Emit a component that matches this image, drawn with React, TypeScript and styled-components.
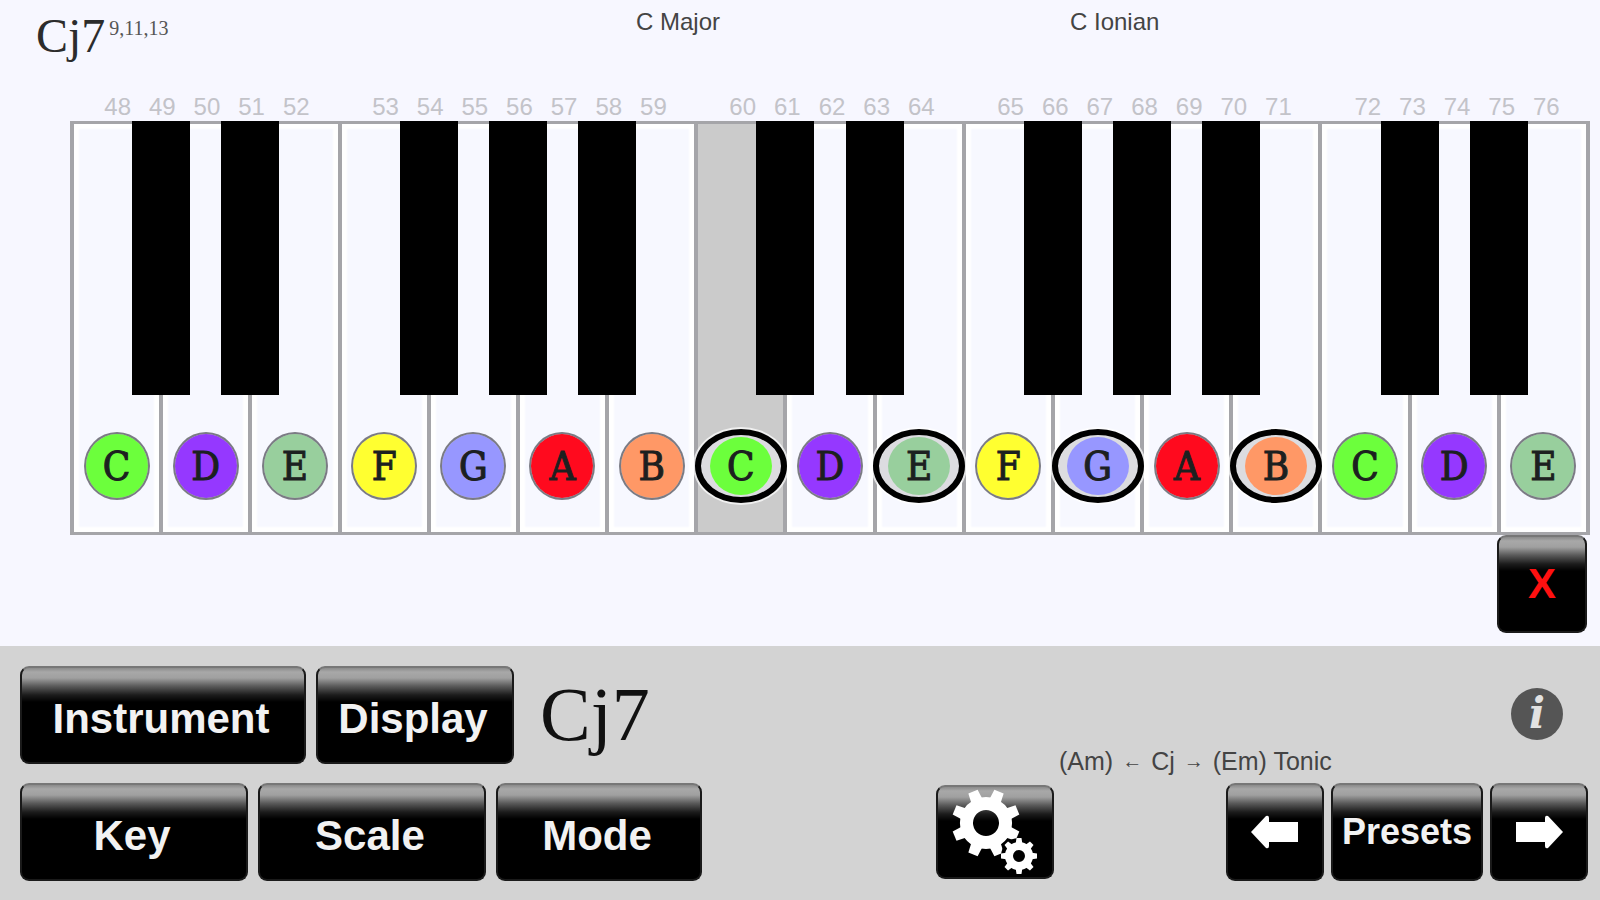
import React from "react";
import styled, { createGlobalStyle } from "styled-components";

const GlobalStyle = createGlobalStyle`
  *, *::before, *::after { box-sizing: border-box; }
  body { margin: 0; background: #f7f7ff; }
  button { font: inherit; cursor: pointer; }
`;

const SANS = `"Liberation Sans", Arial, sans-serif`;
const SERIF = `"Liberation Serif", "Times New Roman", serif`;

const Page = styled.div`
  min-height: 100vh;
  display: flex;
  flex-direction: column;
  font-family: ${SANS};
  color: #333;
`;

const Header = styled.header`
  display: grid;
  grid-template-columns: 600fr 434fr 530fr;
  height: 94px;
  padding: 10px 0 0 36px;
`;

const HeaderText = styled.span`
  font-size: 24px;
  line-height: 24px;
  color: #444;
`;

const ChordTitle = styled.h1`
  display: flex;
  align-items: flex-start;
  gap: 4px;
  margin: 0;
  font: 400 48px/52px ${SERIF};
  color: #2c2c2c;
`;

const Extensions = styled.sup`
  padding-top: 6px;
  font-size: 20px;
  line-height: 24px;
  color: #555;
`;

const NumberRow = styled.div`
  display: grid;
  grid-template-columns: repeat(68, minmax(0, 1fr));
  height: 27px;
  margin: 0 9px 0 73px;
`;

const KeyNumber = styled.span<{ $col: number }>`
  grid-column: ${(p) => p.$col} / span 2;
  justify-self: center;
  font-size: 24px;
  line-height: 26px;
  color: #c3c3c9;
`;

const Keyboard = styled.div`
  display: grid;
  grid-template-columns: repeat(68, minmax(0, 1fr));
  grid-template-rows: 272px 138px;
  margin: 0 10px 0 70px;
  border: 2px solid #a5a5a9;
`;

const WhiteKey = styled.button<{ $col: number; $held?: boolean }>`
  grid-column: ${(p) => p.$col} / span 4;
  grid-row: 1 / 3;
  display: flex;
  align-items: flex-end;
  justify-content: center;
  padding: 0 0 29px;
  border: 2px solid #a5a5a9;
  border-width: 1px 2px;
  background: ${(p) => (p.$held ? "#cbcbcb" : "#f7f8ff")};
  box-shadow: ${(p) => (p.$held ? "none" : "inset 0 0 2px 5px #fff")};
`;

const BlackKey = styled.button<{ $col: number }>`
  grid-column: ${(p) => p.$col} / span 4;
  grid-row: 1;
  justify-self: center;
  z-index: 1;
  width: 65%;
  margin-top: -2px;
  padding: 0;
  border: 0;
  background: #000;
`;

const NoteSlot = styled.span<{ $ringed?: boolean }>`
  flex: none;
  z-index: 2;
  display: flex;
  align-items: center;
  justify-content: center;
  width: 92px;
  height: 74px;
  border-radius: 50%;
  border: 6px solid ${(p) => (p.$ringed ? "#000" : "transparent")};
  background: ${(p) => (p.$ringed ? "#dcdce0" : "transparent")};
  box-shadow: ${(p) => (p.$ringed ? "0 0 0 2px rgba(255, 255, 255, 0.7)" : "none")};
`;

const Note = styled.span<{ $color: string; $ringed?: boolean }>`
  flex: none;
  width: 66px;
  height: ${(p) => (p.$ringed ? 62 : 68)}px;
  border-radius: 50%;
  border: 2px solid ${(p) => (p.$ringed ? "transparent" : "rgba(40, 40, 50, 0.6)")};
  background: ${(p) => p.$color};
  background-clip: padding-box;
  font-family: "DejaVu Serif Condensed", "DejaVu Serif", serif;
  font-stretch: condensed;
  font-size: 40px;
  line-height: ${(p) => (p.$ringed ? 58 : 64)}px;
  text-align: center;
  color: #1c2020;
  -webkit-text-stroke: 1px #1c2020;
`;

const CloseRow = styled.div`
  display: flex;
  justify-content: flex-end;
  height: 111px;
  padding-right: 13px;
`;

const GlossButton = styled.button<{ $w: number; $h?: number; $size?: number; $color?: string; $drop?: boolean }>`
  flex: none;
  display: flex;
  align-items: center;
  justify-content: center;
  width: ${(p) => p.$w}px;
  height: ${(p) => p.$h ?? 98}px;
  padding: ${(p) => (p.$drop ? "8px 4px 0 0" : "0")};
  border: 2px solid #1a1a1a;
  border-top-color: #777;
  border-radius: 9px;
  background: linear-gradient(#7c7c7c 0, #a8a8a8 6px, #a0a0a0 12px, #5c5c5c 20px, #1c1c1c 29px, #000 36px) #000;
  background-origin: border-box;
  font-size: ${(p) => p.$size ?? 42}px;
  font-weight: 700;
  line-height: 1;
  color: ${(p) => p.$color ?? "#f2f2f2"};
`;

const Panel = styled.footer`
  flex: 1;
  display: flex;
  justify-content: space-between;
  padding: 20px 12px 18px 20px;
  background: #d3d3d3;
`;

const PanelSide = styled.div`
  display: flex;
  flex-direction: column;
  gap: 19px;
`;

const ButtonRow = styled.div`
  display: flex;
  gap: 10px;
`;

const ChordName = styled.output`
  padding-left: 16px;
  font: 400 76px/96px ${SERIF};
  color: #111;
`;

const PresetSide = styled.div`
  display: flex;
  flex-direction: column;
  width: 652px;
`;

const InfoButton = styled.button`
  align-self: flex-end;
  width: 52px;
  height: 52px;
  margin: 22px 25px 9px 0;
  padding: 0;
  border: 0;
  border-radius: 50%;
  background: #555;
  font: italic 700 42px/52px "DejaVu Serif", serif;
  color: #e2e2e2;
`;

const Relation = styled.p`
  display: flex;
  gap: 9px;
  margin: 0 0 10px 123px;
  font-size: 25px;
  line-height: 24px;
  color: #444;
`;

const RelationArrow = styled.span`
  font-size: 20px;
`;

const PresetRow = styled.div`
  display: flex;
  align-items: center;
  justify-content: space-between;
`;

const PresetNav = styled.div`
  display: flex;
  gap: 7px;
`;

const COLORS: Record<string, string> = {
  C: "#6cff3c",
  D: "#9538ff",
  E: "#98cf9d",
  F: "#ffff30",
  G: "#9797ff",
  A: "#ff0a1e",
  B: "#ff9866",
};

const SCALE = ["C", "D", "E", "F", "G", "A", "B"];
const RINGED = [7, 9, 11, 13];
const whites = Array.from({ length: 17 }, (_, i) => ({
  name: SCALE[i % 7],
  ringed: RINGED.includes(i),
  held: i === 7,
}));

// Boundaries between white keys which carry a black key.
const blacks = Array.from({ length: 16 }, (_, i) => i + 1).filter((b) => ![0, 3].includes(b % 7));

// Each semitone sits half a white key after the previous one, with a free slot at E-F and B-C.
const numbers: { value: number; col: number }[] = [];
let midi = 48;
for (let slot = 0; slot < 33; slot++) {
  const boundary = slot % 2 === 1 ? (slot + 1) / 2 : null;
  if (boundary !== null && [0, 3].includes(boundary % 7)) continue;
  numbers.push({ value: midi++, col: slot * 2 + 2 });
}

function Gear({ cx, cy, outer, body, hole, tooth, turn }: Record<string, number>) {
  return (
    <g transform={`translate(${cx} ${cy}) rotate(${turn})`}>
      {Array.from({ length: 8 }, (_, i) => (
        <path
          key={i}
          transform={`rotate(${i * 45})`}
          d={`M${-tooth / 2 - 1} ${-body + 3}L${-tooth / 2} ${-outer}H${tooth / 2}L${tooth / 2 + 1} ${-body + 3}Z`}
          fill="#fff"
        />
      ))}
      <circle r={(body + hole) / 2} fill="none" stroke="#fff" strokeWidth={body - hole} />
    </g>
  );
}

function Arrow({ right }: { right?: boolean }) {
  return (
    <svg width="48" height="34" viewBox="0 0 48 34" aria-hidden="true">
      <path
        transform={right ? "translate(48 0) scale(-1 1)" : undefined}
        d="M0 17L15 1Q18 0 18 3V7H47V27H18V31Q18 34 15 33Z"
        fill="#fff"
      />
    </svg>
  );
}

export default function App() {
  return (
    <Page>
      <GlobalStyle />
      <Header>
        <ChordTitle>
          Cj7<Extensions>9,11,13</Extensions>
        </ChordTitle>
        <HeaderText>C Major</HeaderText>
        <HeaderText>C Ionian</HeaderText>
      </Header>
      <main>
        <NumberRow>
          {numbers.map((n) => (
            <KeyNumber key={n.value} $col={n.col}>
              {n.value}
            </KeyNumber>
          ))}
        </NumberRow>
        <Keyboard>
          {whites.map((k, i) => (
            <WhiteKey key={i} $col={i * 4 + 1} $held={k.held}>
              <NoteSlot $ringed={k.ringed}>
                <Note $color={COLORS[k.name]} $ringed={k.ringed}>
                  {k.name}
                </Note>
              </NoteSlot>
            </WhiteKey>
          ))}
          {blacks.map((b) => (
            <BlackKey key={b} $col={b * 4 - 1} aria-label={`Black key ${b}`} />
          ))}
        </Keyboard>
        <CloseRow>
          <GlossButton $w={90} $color="#ff1010">
            X
          </GlossButton>
        </CloseRow>
      </main>
      <Panel>
        <PanelSide>
          <ButtonRow>
            <GlossButton $w={286} $drop>
              Instrument
            </GlossButton>
            <GlossButton $w={198} $drop>
              Display
            </GlossButton>
            <ChordName>Cj7</ChordName>
          </ButtonRow>
          <ButtonRow>
            <GlossButton $w={228} $drop>
              Key
            </GlossButton>
            <GlossButton $w={228} $drop>
              Scale
            </GlossButton>
            <GlossButton $w={206} $drop>
              Mode
            </GlossButton>
          </ButtonRow>
        </PanelSide>
        <PresetSide>
          <InfoButton aria-label="Info">i</InfoButton>
          <Relation>
            <span>(Am)</span>
            <RelationArrow>←</RelationArrow>
            <span>Cj</span>
            <RelationArrow>→</RelationArrow>
            <span>(Em) Tonic</span>
          </Relation>
          <PresetRow>
            <GlossButton $w={118} $h={94} aria-label="Settings">
              <svg width="114" height="90" viewBox="0 0 114 90" aria-hidden="true">
                <Gear cx={48} cy={36} outer={34} body={26} hole={13} tooth={10} turn={22.5} />
                <circle cx="81" cy="69" r="18" fill="#000" />
                <Gear cx={81} cy={69} outer={18} body={14} hole={6} tooth={5} turn={0} />
              </svg>
            </GlossButton>
            <PresetNav>
              <GlossButton $w={98} aria-label="Previous preset">
                <Arrow />
              </GlossButton>
              <GlossButton $w={152} $size={36}>
                Presets
              </GlossButton>
              <GlossButton $w={98} aria-label="Next preset">
                <Arrow right />
              </GlossButton>
            </PresetNav>
          </PresetRow>
        </PresetSide>
      </Panel>
    </Page>
  );
}
